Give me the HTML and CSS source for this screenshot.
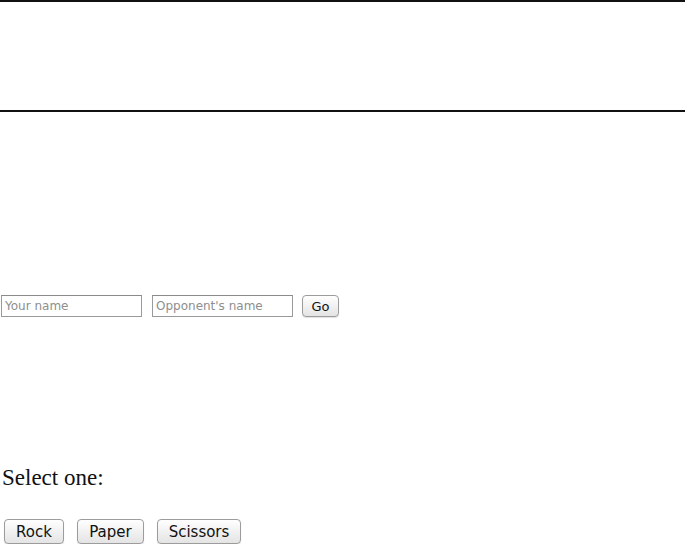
FILE: index.html
```html
<!DOCTYPE html>
<html>
<head>
<meta charset="utf-8">
<link rel="stylesheet" href="styles.css">
</head>
<body>
<hr class="rule">
<div class="banner"></div>
<hr class="rule">
<div class="spacer-top"></div>
<form class="names">
  <input class="field" type="text" placeholder="Your name">
  <input class="field" type="text" placeholder="Opponent's name">
  <button class="btn go" type="button">Go</button>
</form>
<div class="spacer-mid"></div>
<h3 class="prompt">Select one:</h3>
<div class="choices">
  <button class="btn choice" type="button">Rock</button>
  <button class="btn choice" type="button">Paper</button>
  <button class="btn choice" type="button">Scissors</button>
</div>
</body>
</html>
```
FILE: styles.css
```css
html, body {
  margin: 0;
  padding: 0;
  background: #fff;
}
body {
  font-family: "Liberation Serif", serif;
  color: #111;
}
.rule {
  margin: 0;
  border: 0;
  height: 2px;
  background: #111;
}
.banner {
  height: 108px;
}
.spacer-top {
  height: 182px;
}
.names {
  display: flex;
  align-items: center;
  margin: 0;
  padding-left: 1px;
  height: 24px;
}
.field {
  box-sizing: border-box;
  width: 141px;
  height: 22px;
  margin: 0 10px 0 0;
  padding: 2px 3px;
  border: 1px solid #9a9a9a;
  border-top-color: #8a8a8a;
  background: #fff;
  font-family: "DejaVu Sans", sans-serif;
  font-size: 12px;
  color: #333;
  outline: none;
}
.field::placeholder {
  color: #8e8e8e;
}
.btn {
  box-sizing: border-box;
  border: 1px solid #9c9c9c;
  border-radius: 4px;
  background: linear-gradient(#ffffff, #f1f1f1 50%, #e4e4e4);
  box-shadow: 0 1px 1px rgba(0,0,0,0.12);
  font-family: "DejaVu Sans", sans-serif;
  color: #111;
  padding: 0;
  margin: 0;
}
.go {
  width: 37px;
  height: 22px;
  font-size: 13px;
  margin-left: -1px;
}
.spacer-mid {
  height: 147px;
}
.prompt {
  margin: 0;
  padding-left: 2px;
  font-family: "Liberation Serif", serif;
  font-weight: normal;
  font-size: 23px;
  line-height: 26px;
  color: #111;
}
.choices {
  display: flex;
  gap: 13px;
  margin-top: 28px;
  padding-left: 4px;
}
.choice {
  height: 25px;
  font-size: 15px;
  padding: 0 6px;
}
.choice:nth-child(1) { width: 60px; }
.choice:nth-child(2) { width: 67px; }
.choice:nth-child(3) { width: 84px; }
```
